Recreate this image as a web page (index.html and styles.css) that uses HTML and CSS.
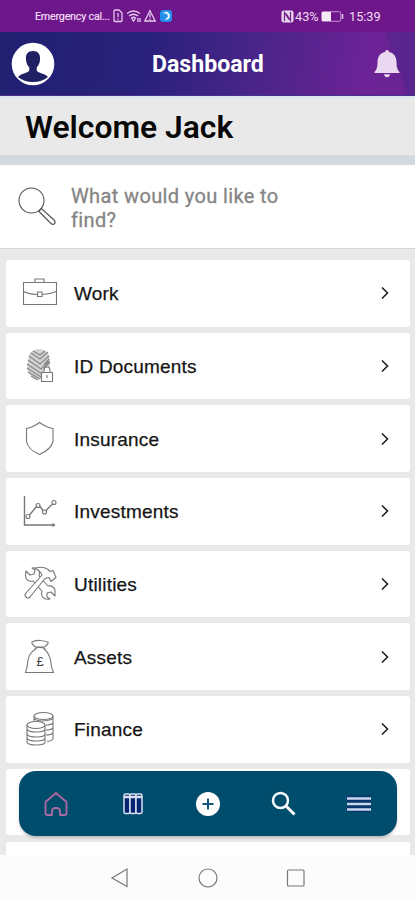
FILE: index.html
```html
<!DOCTYPE html>
<html lang="en">
<head>
<meta charset="utf-8">
<title>Dashboard</title>
<link rel="stylesheet" href="styles.css">
</head>
<body>
<div class="phone">
  <div class="status">
    <span class="carrier">Emergency cal...</span>
    <svg class="status-icons" width="62" height="14" viewBox="0 0 62 14" fill="none" stroke="#e6c9ec" stroke-width="1.3">
      <path d="M3 1h4l3 3v7.500q0 1-1 1H3q-1 0-1-1V2q0-1 1-1zM6 4v4M6 9.500v1.300"/>
      <path d="M15 4.500q6.500-5 13 0M17 7q4.500-3.500 9 0M19.500 9q2-1.500 4 0l-2 3zM26 9v4M28 9v4"/>
      <path d="M38 1.700l5.200 10.300H32.800zM38 5v3.500M38 9.500v1.300"/>
      <rect x="48" y="1" width="12" height="12" rx="3" fill="#238fe9" stroke="none"/>
      <path d="M50.500 4l4-1.500q4 2 3.500 5-1 4-5 3l3-3-1-2.500z" fill="#e1f4ff" stroke="none"/>
    </svg>
    <svg class="nfc" width="13" height="13" viewBox="0 0 13 13"><rect x=".5" y=".5" width="12" height="12" rx="2" fill="#ead5ee"/><path d="M3.500 11V2.500l4.500 7M9.500 2v8.500L5 3.500" fill="none" stroke="#6d1c87" stroke-width="1.200"/></svg>
    <span class="percent">43%</span>
    <svg class="battery" width="23" height="11" viewBox="0 0 23 11"><rect x=".7" y=".7" width="19" height="9.600" rx="1.500" fill="none" stroke="#c792cf"/><path d="M1 1h9v9H1z" fill="#f7eaf8"/><path d="M21.500 3v5" stroke="#e6c9ec" stroke-width="1.500"/></svg>
    <span class="clock">15:39</span>
  </div>
  <header class="header">
    <svg class="avatar" width="44" height="44" viewBox="0 0 44 44"><circle cx="22" cy="22" r="21.300" fill="#fff"/><path d="M22 9c5 0 7.500 3 7 8.500-.2 4-1.600 6-3.300 8v3c1.500 3 8.300 2.500 11.300 6.500Q31 40 22 40T7 35c3-4 9.800-3.500 11.300-6.500v-3c-1.700-2-3.100-4-3.300-8C14.500 12 17 9 22 9z" fill="#202064"/></svg>
    <h1>Dashboard</h1>
    <svg class="bell" width="26" height="29" viewBox="0 0 26 29" fill="#ead8f0"><path d="M13 1q1.800 0 2 2c5 1 7.500 5 7.500 10 0 5 .5 7 3 10v1H.5v-1c2.500-3 3-5 3-10 0-5 2.500-9 7.500-10q.2-2 2-2zM10 25.200h6q-.5 3-3 3t-3-3z"/></svg>
  </header>
  <div class="welcome">Welcome Jack</div>
  <div class="search">
    <svg width="40" height="40" viewBox="0 0 40 40" fill="none" stroke="#555"><circle cx="14.500" cy="14.500" r="12.500" stroke-width="1.100"/><path d="M22.500 24.500l2-2 13 12q1.500 2-.5 3.500-1.500 1-3-.5L22.500 26q-.8-.8 0-1.500z" stroke-width="1.200"/></svg>
    <div class="prompt">What would you like to<br>find?</div>
  </div>
  <main class="list">
    <div class="card"><svg class="icon" viewBox="0 0 36 36"><path d="M1.500 7.500h33v22h-33zM13 7V4h9v3M1.500 16.500q6 3 13.500 3M20 19.500q7 0 14.500-3M15.500 17h4.500v4.500h-4.500z"/></svg><span>Work</span><svg class="arrow" viewBox="0 0 10 14"><path d="M2 1.500L7.500 7 2 12.500"/></svg></div>
    <div class="card"><svg class="icon" viewBox="0 0 36 36"><path d="M7 7C10 0 23-1 27 7q2 7 0 15l-5 6q-2 4-8 3Q5 27 5 19z" fill="#d2d2d2" stroke="none"/><path d="M9 5l9 6 8-7M7 8l11 8 9-8M6 12l13 9 8-8M5 16l15 10M5 20l14 9M6 24l12 7M9 28l7 4M11 3l7 4 5-4M22 17l5-6M22 20l6-6" stroke="#888" stroke-width="1.200"/><path d="M19.500 24.500h11v9h-11zM22 24v-2q0-3 3-3t3 3v2M25 27v3" fill="#fff" stroke="#777"/></svg><span>ID Documents</span><svg class="arrow" viewBox="0 0 10 14"><path d="M2 1.500L7.500 7 2 12.500"/></svg></div>
    <div class="card"><svg class="icon" viewBox="0 0 36 36"><path d="M17.500 1.500q7 5 13.500 6v13q-2 8-13.500 13Q6 28.500 4.500 20.500v-13q6-1 13-6z"/></svg><span>Insurance</span><svg class="arrow" viewBox="0 0 10 14"><path d="M2 1.500L7.500 7 2 12.500"/></svg></div>
    <div class="card"><svg class="icon" viewBox="0 0 36 36"><path d="M2.500 3v29H32M30.500 30.500l2 1.500-2 1.500M7.500 22l7.500-9M17.500 13l4 5M23.500 18l7-7" stroke-width="1.400"/><g><circle cx="6" cy="23.500" r="2"/><circle cx="16" cy="12.500" r="2"/><circle cx="22.500" cy="19" r="2"/><circle cx="32" cy="9.500" r="2"/></g></svg><span>Investments</span><svg class="arrow" viewBox="0 0 10 14"><path d="M2 1.500L7.500 7 2 12.500"/></svg></div>
    <div class="card"><svg class="icon" viewBox="0 0 36 36"><g fill="#fff" stroke-linejoin="round"><path d="M4 5l4 4 4-1 1-4-3-2q5-1 7 3 1 3 0 5l9 10q5-1 7 4v6l-4-4-4 1v4l3 2q-6 1-8-3-1-2 0-5L11 15q-5 1-7-3-1-3 0-7z"/><path d="M13 2.500q7-3 13 1l2 2 3-1 3 7-5 4-2-4-4 1L8 31q-2 2-4 0t0-4L20 9q-2-5-7-6.500z"/></g></svg><span>Utilities</span><svg class="arrow" viewBox="0 0 10 14"><path d="M2 1.500L7.500 7 2 12.500"/></svg></div>
    <div class="card"><svg class="icon" viewBox="0 0 36 36"><path d="M13.500 8Q9 4.500 10 3q3-2 8-1.500T26 3q1 1.500-3.500 5zM12.500 10q5-3 11 0M14 10q-7 4-8 11-.5 7-2.500 12.500h28q-2.500-5.500-3-12.500Q27 14 22 10"/><text x="14.500" y="27">£</text></svg><span>Assets</span><svg class="arrow" viewBox="0 0 10 14"><path d="M2 1.500L7.500 7 2 12.500"/></svg></div>
    <div class="card"><svg class="icon" viewBox="0 0 36 36"><path d="M5 14v17c1 4 18 4 18 0V14M12 10V5M31 5v23q-2 3-6 2M12 8q7 4 19 0M24 14q5 0 7-2M24 19q5 0 7-2M24 24q5 0 7-2M5 18c1 4 18 4 18 0M5 23c1 4 18 4 18 0M5 27c1 4 18 4 18 0"/><ellipse cx="21.500" cy="5" rx="9.500" ry="3.500"/><ellipse cx="14" cy="14" rx="9" ry="3.500"/></svg><span>Finance</span><svg class="arrow" viewBox="0 0 10 14"><path d="M2 1.500L7.500 7 2 12.500"/></svg></div>
    <div class="card"></div>
    <div class="card"></div>
  </main>
  <nav class="dock">
    <svg viewBox="0 0 28 28" fill="none" stroke="#a96c9f" stroke-width="1.800"><path d="M3.500 12L14 3l10.500 9v11q0 2-2 2H18v-4q0-3-4-3t-4 3v4H5.500q-2 0-2-2z" stroke-linejoin="round"/></svg>
    <svg viewBox="0 0 28 28" fill="#05256f" stroke="#d7e0f1" stroke-width="1.500"><rect x="6" y="4" width="6" height="19.500" rx="1.500"/><rect x="12" y="4" width="6" height="19.500" rx="1.500"/><rect x="18" y="4" width="6" height="19.500" rx="1.500"/><path d="M6 7h18" stroke-width="2.500"/></svg>
    <svg viewBox="0 0 28 28"><circle cx="14" cy="14" r="12" fill="#fff"/><path d="M14 8.500v11M8.500 14h11" stroke="#165578" stroke-width="2"/></svg>
    <svg viewBox="0 0 28 28" fill="none" stroke="#f6faff"><circle cx="11.500" cy="10.500" r="7.500" stroke-width="2.500"/><path d="M17 16l8.500 8.500" stroke-width="3"/></svg>
    <svg viewBox="0 0 28 28"><path d="M2 5.500h24V22H2z" fill="#06356b"/><path d="M2 8.500h24M2 14h24M2 19.500h24" stroke="#c9d8f0" stroke-width="2.500"/></svg>
  </nav>
  <footer class="system">
    <svg viewBox="0 0 22 22"><path d="M18 2v17.500L3 11z"/></svg>
    <svg viewBox="0 0 22 22"><circle cx="11" cy="11" r="9"/></svg>
    <svg viewBox="0 0 22 22"><rect x="2.500" y="3" width="16.500" height="16" rx="1"/></svg>
  </footer>
</div>
</body>
</html>
```
FILE: styles.css
```css
* { box-sizing: border-box; }
body { margin: 0; font-family: Roboto, sans-serif; }
svg { display: block; flex: none; }
.phone { position: relative; width: 415px; height: 900px; display: flex; flex-direction: column; overflow: hidden; background: #e9e9e9; }
.status { height: 32px; flex: none; display: flex; align-items: center; background: #6e178a; color: #f2dcf4; padding-left: 35px; white-space: nowrap; }
.carrier { width: 77px; font-size: 10.7px; letter-spacing: -.2px; -webkit-text-stroke: .2px #f2dcf4; }
.nfc { margin-left: 107px; }
.percent { width: 25px; margin-left: 1px; font-size: 12.7px; }
.battery { margin-left: 1px; }
.clock { margin-left: 5px; font-size: 12.7px; }
.header { height: 64px; flex: none; display: flex; align-items: center; padding: 0 15px 0 11px; color: #fff; background: linear-gradient(70deg, transparent 93%, #4c258980 93.3%), linear-gradient(100deg, #202071 0%, #29217b 35%, #4a248a 62%, #6d2396 88%, #682493 100%); border-bottom: 1px solid #453189; }
.header h1 { margin: 2px 0 0 97px; font-size: 23.1px; line-height: 28px; font-weight: 700; }
.bell { margin-left: auto; }
.welcome { height: 59px; flex: none; padding: 9px 25px; font-size: 31.8px; line-height: 40px; font-weight: 600; color: #080808; background: #e9e9e9; border-top: 2px solid #dce5ea; }
.search { height: 94px; flex: none; display: flex; align-items: flex-start; padding: 21px 0 0 17px; background: #fff; border-top: 10px solid #d2dadd; border-bottom: 1px solid #d5d5d5; }
.prompt { margin: -2px 0 0 14px; font-size: 20px; line-height: 24px; color: #858585; letter-spacing: .37px; -webkit-text-stroke: .3px #858585; }
.list { height: 606px; flex: none; display: flex; flex-direction: column; gap: 6.2px; padding: 11px 5px 0 6px; }
.card { height: 66.5px; flex: none; display: flex; align-items: center; padding: 0 20px 0 16px; background: #fff; border-radius: 3px; font: 19px/24px "Liberation Sans", sans-serif; letter-spacing: .2px; color: #151515; -webkit-text-stroke: .25px #151515; }
.card span { flex: 1; margin: 2px 0 0 16px; }
.icon { width: 36px; height: 36px; fill: none; stroke: #777; stroke-width: 1.1; }
.icon text { font: 13px "Liberation Sans", sans-serif; fill: #444; stroke: none; -webkit-text-stroke: 0; }
.arrow { width: 10px; height: 14px; fill: none; stroke: #202020; stroke-width: 1.6; }
.dock { position: absolute; left: 19px; top: 771px; width: 378px; height: 65px; border-radius: 17px; display: flex; align-items: center; justify-content: space-between; padding: 0 24px 0 23px; background: #004c6d; box-shadow: 0 2px 3px #0003; }
.dock svg { width: 28px; height: 28px; }
.system { position: absolute; left: 0; right: 0; bottom: 0; height: 45px; display: flex; align-items: center; justify-content: center; gap: 66px; background: #fcfcfc; }
.system svg { width: 22px; height: 22px; fill: none; stroke: #777; stroke-width: 1.2; }
```
